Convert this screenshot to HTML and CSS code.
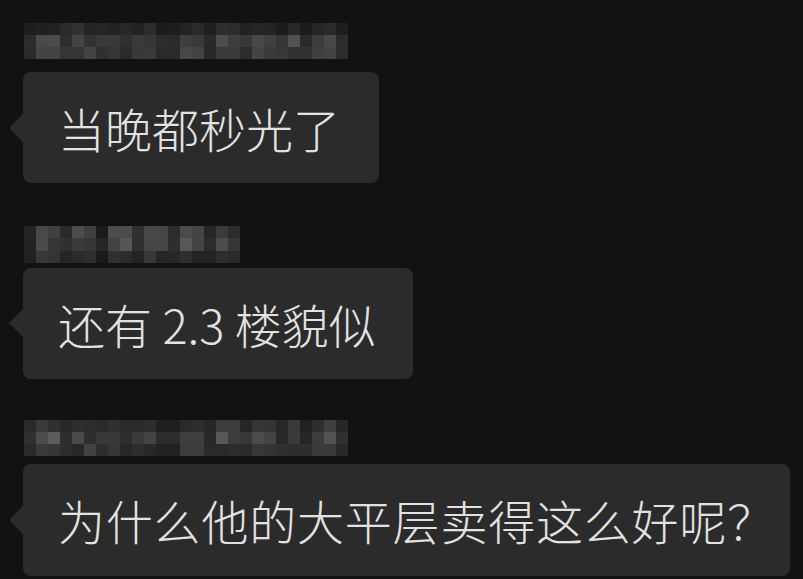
FILE: index.html
```html
<!doctype html>
<html lang="zh-CN">

<head>
  <meta charset="UTF-8" />
  <meta name="viewport" content="width=device-width, initial-scale=1.0" />
  <title>Chat</title>
  <link rel="stylesheet" href="styles.css">
</head>

<body>
  <main class="chat">
    <section class="message message-first">
      <div class="name" data-cells="1e,20,22,2a,32,24,26,22,28,22,2c,1c,1e,24,2a,20,2e,2c,22,26,24,1c,28,1c,26,2a,1e|2c,4a,4c,2e,44,33,3a,3a,30,3a,36,2c,2a,3e,3a,2a,4c,3e,38,48,40,36,52,2a,3c,48,2c|2a,44,44,36,36,44,30,36,2a,38,3a,2a,2a,48,44,28,3a,3a,2c,44,3a,38,32,32,40,44,2c"></div>
      <p class="bubble bubble-short">当晚都秒光了</p>
    </section>

    <section class="message message-second">
      <div class="name" data-cells="24,48,40,2a,4c,40,1a,4c,4c,30,48,46,2c,4c,44,26,3a,2c|22,4a,36,30,3a,36,26,44,56,30,46,46,2e,58,44,2c,4c,36|22,38,34,26,2a,2e,1a,30,2c,24,38,26,28,2e,24,24,2e,2a"></div>
      <p class="bubble">还有 2.3 楼貌似</p>
    </section>

    <section class="message message-third">
      <div class="name" data-cells="2a,3a,30,28,2e,2c,2a,30,2a,2a,2e,20,20,2a,2e,26,3c,3c,26,36,34,28,3a,22,2e,40,26|30,4c,5c,2e,4a,2e,38,38,2e,3a,44,2c,2c,3e,3e,28,58,3c,38,4c,44,28,3a,26,3c,52,30|2a,3a,36,2e,28,42,2e,36,28,2e,28,22,22,3c,3c,2a,2a,2c,2a,38,34,30,2e,2e,3a,3a,28"></div>
      <p class="bubble bubble-wide">为什么他的大平层卖得这么好呢？</p>
    </section>
  </main>

  <script>
    // names are pixelated in the screenshot, draw them as a mosaic of grey cells
    document.querySelectorAll('.name').forEach((name) => {
      const rows = name.getAttribute('data-cells').split('|').map((row) => row.split(','))
      name.style.gridTemplateColumns = `repeat(${rows[0].length}, 12px)`
      rows.forEach((row) => {
        row.forEach((grey) => {
          const cell = document.createElement('span')
          cell.style.background = `#${grey}${grey}${grey}`
          name.appendChild(cell)
        })
      })
    })
  </script>
</body>

</html>
```

FILE: styles.css
```css
:root {
  --bg-color: #121212;
  --bubble-bg: #2b2b2b;
  --text-color: #e2e2e2;
}

* {
  margin: 0;
  padding: 0;
  box-sizing: border-box;
}

body {
  background: var(--bg-color);
  color: var(--text-color);
  font-family: "Noto Sans CJK SC", "Noto Sans", sans-serif;
  width: 803px;
  height: 579px;
  overflow: hidden;
}

.chat {
  display: flex;
  flex-direction: column;
  padding: 23px 0 0 23px;
}

.message {
  display: flex;
  flex-direction: column;
  align-items: flex-start;
}

.name {
  display: grid;
  grid-auto-rows: 12px;
  margin-left: 1px;
  filter: blur(0.4px);
}

.message-first .name {
  margin-bottom: 13px;
}

.message-second {
  margin-top: 43px;
}

.message-second .name {
  grid-auto-rows: 12.33px;
  margin-bottom: 5px;
}

.message-third {
  margin-top: 41px;
}

.message-third .name {
  margin-bottom: 8px;
}

.bubble {
  position: relative;
  background: var(--bubble-bg);
  border-radius: 8px;
  padding: 25px 37px 25px 35px;
  font-size: 47px;
  font-weight: 300;
  line-height: 61px;
  white-space: nowrap;
  text-spacing-trim: space-all;
}

.bubble-short {
  padding-right: 39px;
}

.bubble-wide {
  padding-right: 15px;
  padding-bottom: 26px;
  letter-spacing: 0.8px;
}

.bubble::before {
  content: '';
  position: absolute;
  left: -14px;
  top: 50%;
  margin-top: -14px;
  border-style: solid;
  border-width: 14px 14px 14px 0;
  border-color: transparent var(--bubble-bg) transparent transparent;
}
```
